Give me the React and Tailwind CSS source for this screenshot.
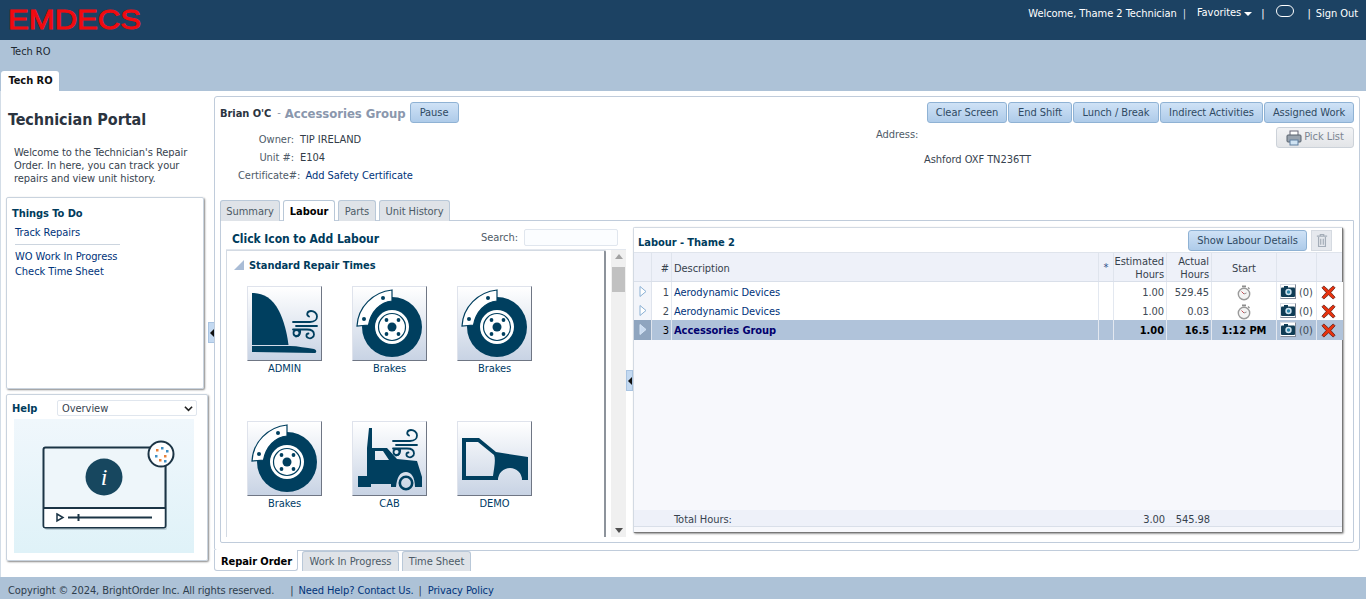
import React from "react";

const font = "font-['DejaVu_Sans_Condensed','DejaVu_Sans',sans-serif]";
const COLS = "grid grid-cols-[18px_20px_427px_15px_53px_45px_65px_40px_26px]";

function Btn({ children, className = "" }) {
  return (
    <button className={`h-[21px] rounded-[3px] border border-[#8fb2d4] bg-gradient-to-b from-[#cfe2f6] to-[#aecbe9] text-[#2f4a63] text-[11px] leading-none ${className}`}>
      {children}
    </button>
  );
}

function Tab({ children, active, className = "" }) {
  return (
    <div className={`h-[21px] flex items-center justify-center rounded-t-[3px] border border-b-0 border-[#b9c8d8] text-[11px] ${active ? "bg-white font-bold text-black" : "bg-[#dfe3e8] text-[#4c5a66]"} ${className}`}>
      {children}
    </div>
  );
}

function Wind({ x = 0, y = 0 }) {
  return (
    <g transform={`translate(${x} ${y})`} fill="none" stroke="#003f5f" strokeWidth="1.8" strokeLinecap="round">
      <path d="M0 11 H17 C22 11 24 8 24 5.5 C24 2 21 0 18 0 C14 0 13 4 16 5.5" />
      <path d="M3 15 H24" />
      <path d="M0 18.5 H14 C19 18.5 21 21 21 23.5 C21 26 18 28 15.5 27 C12.5 26 13 22.5 15.5 22.5" />
      <circle cx="3.5" cy="22" r="3" />
      <path d="M7 19 C8 22 6 25.5 3 25.5" />
    </g>
  );
}

function Brake() {
  return (
    <svg viewBox="0 0 73 73" className="w-full h-full">
      <circle cx="39" cy="40" r="30" fill="#003f5f" />
      <circle cx="39" cy="40" r="17" fill="#fff" />
      <circle cx="39" cy="40" r="13.5" fill="none" stroke="#003f5f" strokeWidth="1.2" />
      <circle cx="39" cy="40" r="4.5" fill="#003f5f" />
      <circle cx="33.5" cy="33" r="1.9" fill="#003f5f" />
      <circle cx="45.5" cy="33" r="1.9" fill="#003f5f" />
      <circle cx="33.5" cy="47" r="1.9" fill="#003f5f" />
      <circle cx="45.5" cy="47" r="1.9" fill="#003f5f" />
      <path d="M4 39 C5 20 20 5 39 3 L39 14 C27 15 18 25 15.5 38 Z" fill="#fff" stroke="#003f5f" strokeWidth="1.2" />
      <circle cx="11" cy="32" r="2" fill="#003f5f" />
      <circle cx="30" cy="11" r="2" fill="#003f5f" />
    </svg>
  );
}

function Admin() {
  return (
    <svg viewBox="0 0 73 73" className="w-full h-full">
      <path d="M4 6 C14 6 24 10 31 24 C36 34 39 46 40.5 58 H4 Z" fill="#003f5f" />
      <path d="M4 59 H42 C50 59 58 61 66 62 C69 63 69 66 66 66 L4 65 Z" fill="#003f5f" />
      <Wind x={45} y={24} />
    </svg>
  );
}

function Cab() {
  return (
    <svg viewBox="0 0 73 73" className="w-full h-full">
      <path fillRule="evenodd" d="M14 26 L16 6 H19 V26 H34 L44 37 L64 39 L69 55 V65 H62 C62 55 58 50 53 50 C47 50 44 55 43 65 H38 V62 H18 V65 H5 V54 H14 Z M22 29 V38 H36 L30 29 Z" fill="#003f5f" />
      <circle cx="53" cy="61" r="6.2" fill="none" stroke="#003f5f" strokeWidth="2.6" />
      <Wind x={40} y={8} />
    </svg>
  );
}

function Demo() {
  return (
    <svg viewBox="0 0 73 73" className="w-full h-full">
      <path fillRule="evenodd" d="M4 16 H21 L38 30 L70 35 V58 H64 A12 12 0 0 0 40 58 H4 Z M8 20 V54 H35 C36 46 38 38 36 33 L20 20 Z" fill="#003f5f" />
    </svg>
  );
}

function IconTile({ label, children }) {
  return (
    <div className="w-[105px] h-[135px]">
      <div className="w-[75px] h-[75px] border border-[#dfe3ec] border-r-[#6f7684] border-b-[#6f7684] bg-gradient-to-b from-white to-[#c8d3e4]">
        {children}
      </div>
      <div className="w-[75px] mt-[1px] text-center text-[11px] text-[#003b66] leading-[14px]">{label}</div>
    </div>
  );
}

function Camera() {
  return (
    <span className="w-[16px] h-[15px] border border-[#d8dde5] border-r-[#7e8796] border-b-[#7e8796] bg-white flex items-center justify-center">
      <svg viewBox="0 0 14 11" className="w-[14px] h-[11px]">
        <rect x="0" y="1.5" width="14" height="9.5" rx="1" fill="#0f3c55" />
        <rect x="3" y="0" width="4" height="2" fill="#0f3c55" />
        <circle cx="7.5" cy="6" r="3.2" fill="#cfe3ef" />
        <circle cx="7.5" cy="6" r="1.7" fill="#2d84a8" />
      </svg>
    </span>
  );
}

function RedX() {
  return (
    <svg viewBox="0 0 16 16" className="w-[15px] h-[15px] -ml-[3px]">
      <path d="M1 3 L3 1 L8 5.5 L13 1 L15 3 L10.5 8 L15 13 L13 15 L8 10.5 L3 15 L1 13 L5.5 8 Z" fill="#e8320e" stroke="#5a1a10" strokeWidth="0.8" />
    </svg>
  );
}

function Stopwatch() {
  return (
    <svg viewBox="0 0 14 16" className="w-[14px] h-[16px]">
      <rect x="5" y="0.5" width="4" height="1.8" fill="#8d8d8d" />
      <path d="M11 2.5 L12.5 4" stroke="#8d8d8d" strokeWidth="1.3" />
      <circle cx="7" cy="9" r="5.7" fill="#f4f4f4" stroke="#9a9a9a" strokeWidth="1.4" />
      <path d="M7 9 L4.5 6.5" stroke="#c5535a" strokeWidth="1" />
      <path d="M7 9 L9.5 8" stroke="#777" strokeWidth="0.8" />
    </svg>
  );
}

function Row({ n, hours, actual, selected, start }) {
  const c = selected ? "bg-[#b0c3da]" : "bg-white";
  const cell = `${c} flex items-center border-r border-[#e3e8f0] h-full`;
  const arrowFill = selected ? "#c9dbf0" : "#fff";
  return (
    <div className={`${COLS} h-[19px] border-b ${selected ? "border-[#b0c3da]" : "border-[#e6eaf1]"} text-[11px] ${selected ? "font-bold text-black" : "text-[#3e4a55]"}`}>
      <div className={`${selected ? "bg-[#8fa5bf]" : "bg-[#f3f5fa]"} flex items-center justify-center border-r border-[#dfe4ed] h-full`}>
        <svg viewBox="0 0 8 11" className="w-[8px] h-[11px]">
          <path d="M1 0.5 L7 5.5 L1 10.5 Z" fill={arrowFill} stroke={selected ? "#d7e5f5" : "#8ab0d4"} strokeWidth="1" />
        </svg>
      </div>
      <div className={`${cell} pt-[3px] justify-end pr-[2px] font-normal`}>{n}</div>
      <div className={`${cell} pt-[3px] pl-[2px] ${selected ? "text-[#00006e]" : "text-[#00337a]"}`}>
        {selected ? "Accessories Group" : "Aerodynamic Devices"}
      </div>
      <div className={cell}></div>
      <div className={`${cell} pt-[3px] justify-end pr-[2px]`}>{hours}</div>
      <div className={`${cell} pt-[3px] justify-end pr-[2px]`}>{actual}</div>
      <div className={`${cell} pt-[2px] justify-center`}>{start || <Stopwatch />}</div>
      <div className={`${cell} gap-[3px] pl-[3px] font-normal text-[#3e4a55]`}><Camera /><span className="pt-[3px]">(0)</span></div>
      <div className={`${c} pt-[1px] flex items-center justify-center h-full`}><RedX /></div>
    </div>
  );
}

export default function App() {
  return (
    <div className={`${font} w-[1366px] h-[599px] overflow-hidden flex flex-col bg-white text-[11px] tracking-[-0.05px] text-[#37434f]`}>
      {/* header */}
      <header className="h-[40px] bg-[#1c4263] flex items-start justify-between text-white shrink-0">
        <svg viewBox="0 0 142 40" className="w-[142px] h-[40px] ml-[7px]">
          <text x="1" y="29" textLength="133" lengthAdjust="spacingAndGlyphs" fill="#f10a0f" stroke="#f10a0f" strokeWidth="0.9" style={{ fontFamily: "'Liberation Sans', sans-serif", fontWeight: 400, fontSize: 28 }}>EMDECS</text>
        </svg>
        <div className="flex items-center h-[28px] pr-[8px] font-medium">
          <span>Welcome, Thame 2 Technician</span>
          <span className="ml-[6px] text-[#d8dfe8]">|</span>
          <span className="ml-[11px] -mt-[2px]">Favorites</span>
          <svg viewBox="0 0 8 4" className="w-[8px] h-[4px] ml-[3px]"><path d="M0 0 H8 L4 4 Z" fill="#fff" /></svg>
          <span className="ml-[9px]">|</span>
          <span className="ml-[12px] -mt-[6px] w-[18px] h-[12px] rounded-[6px] border border-white bg-[#1c4263]"></span>
          <span className="ml-[13px]">|</span>
          <span className="ml-[5px]">Sign Out</span>
        </div>
      </header>

      {/* sub navigation */}
      <div className="h-[51px] bg-[#adc2d7] shrink-0 flex flex-col justify-between">
        <div className="pl-[11px] pt-[4px] text-[#1e2a33] leading-[15px]">Tech RO</div>
        <div className="ml-[1px] w-[58px] h-[20px] pt-[1px] pl-[1px] bg-white rounded-t-[3px] flex items-center justify-center font-bold text-[#111]">Tech RO</div>
      </div>

      {/* main */}
      <main className="h-[486px] flex bg-white border-l border-[#d3dde7] shrink-0">
        <aside className="relative w-[213px] shrink-0 pl-[5px]">
          <h1 className="pt-[18px] pl-[2px] text-[16px] leading-[22px] font-bold text-[#2b3440]">Technician Portal</h1>
          <p className="mt-[15px] pl-[8px] leading-[13px] text-[#37434f]">
            Welcome to the Technician's Repair<br />Order. In here, you can track your<br />repairs and view unit history.
          </p>
          <section className="mt-[12px] w-[198px] h-[192px] border border-[#c9d3de] rounded-[2px] shadow-[1px_1px_2px_#888] pl-[5px] pt-[9px] text-[#00337a]">
            <div className="font-bold text-[#003b5c] leading-[14px]">Things To Do</div>
            <div className="mt-[5px] ml-[3px] leading-[14px]">Track Repairs</div>
            <div className="mt-[4px] ml-[3px] w-[105px] border-t border-[#ccd5df]"></div>
            <div className="mt-[4px] ml-[3px] leading-[15px]">WO Work In Progress</div>
            <div className="ml-[3px] leading-[15px]">Check Time Sheet</div>
          </section>
          <section className="mt-[5px] w-[202px] h-[167px] border border-[#c9d3de] rounded-[2px] shadow-[1px_1px_2px_#888] pt-[5px]">
            <div className="flex items-center h-[16px] pl-[5px]">
              <span className="font-bold text-[#003b5c] w-[45px] pt-[2px]">Help</span>
              <div className="w-[140px] h-[16px] border border-[#e0e6ee] rounded-[2px] flex items-center justify-between pl-[4px] pr-[3px] text-[#37434f]">
                <span className="pt-[2px]">Overview</span>
                <svg viewBox="0 0 10 7" className="w-[9px] h-[7px]"><path d="M1 1.5 L5 5.5 L9 1.5" fill="none" stroke="#222" strokeWidth="1.8" /></svg>
              </div>
            </div>
            <div className="mt-[3px] ml-[7px] w-[180px] h-[134px] bg-gradient-to-b from-[#f0f7fc] to-[#dff2f8]">
              <svg viewBox="0 0 180 134" className="w-full h-full">
                <rect x="31" y="31" width="122" height="80" rx="2" fill="#8fa3ad" opacity="0.45" />
                <rect x="29.5" y="28.5" width="122" height="80" rx="2" fill="#eef6fa" stroke="#1b3445" strokeWidth="2" />
                <rect x="30.5" y="90" width="120" height="18" fill="#fff" />
                <path d="M29.5 89 H151.5" stroke="#1b3445" strokeWidth="2" />
                <circle cx="90" cy="58" r="18.5" fill="#17475f" />
                <text x="90" y="66" textAnchor="middle" fill="#fff" style={{ fontFamily: "'Liberation Serif', serif", fontStyle: "italic", fontSize: 24 }}>i</text>
                <path d="M43 95 L49 98.5 L43 102 Z" fill="#fff" stroke="#1b3445" strokeWidth="1.5" />
                <path d="M54 98.5 H138" stroke="#1b3445" strokeWidth="1.8" />
                <path d="M64.5 95 V102" stroke="#1b3445" strokeWidth="2" />
                <circle cx="147" cy="35" r="12.5" fill="#fff" stroke="#1b3445" strokeWidth="2" />
                <g fill="#e9813a">
                  <rect x="142" y="30" width="2.5" height="2.5" /><rect x="150" y="36" width="2.5" height="2.5" /><rect x="145" y="40" width="2.5" height="2.5" />
                </g>
                <g fill="#3f8fc4">
                  <rect x="147" y="28" width="2.5" height="2.5" /><rect x="152" y="31" width="2.5" height="2.5" /><rect x="141" y="36" width="2.5" height="2.5" /><rect x="150" y="41" width="2.5" height="2.5" />
                </g>
              </svg>
            </div>
          </section>
          <div className="absolute left-[207px] top-[231px] w-[7px] h-[21px] bg-[#c3d9f1] border border-[#a9c4e2] flex items-center justify-center">
            <svg viewBox="0 0 4 8" className="w-[4px] h-[8px]"><path d="M4 0 V8 L0 4 Z" fill="#111" /></svg>
          </div>
        </aside>

        <div className="w-[1146px] shrink-0 pt-[5px]">
          <div className="relative h-[455px] border border-[#c0ccdb] rounded-[3px]">
            {/* order header */}
            <div className="h-[103px] flex pl-[5px] pr-[5px]">
              <div className="w-[655px] shrink-0">
                <div className="flex items-center h-[21px] mt-[5px]">
                  <span className="font-bold text-[#2b3440] pt-[4px]">Brian O'C</span>
                  <span className="ml-[6px] text-[#8a97ad] pt-[2px]">-</span>
                  <span className="ml-[4px] text-[13px] font-bold text-[#8a97ad] pt-[2px]">Accessories Group</span>
                  <Btn className="ml-[4px] w-[49px]">Pause</Btn>
                </div>
                <div className="mt-[8px] grid grid-cols-[70px_auto] gap-x-[6px] w-fit ml-[4px] leading-[18px]">
                  <div className="text-right text-[#4f5b68]">Owner:</div><div className="text-[#333d48]">TIP IRELAND</div>
                  <div className="text-right text-[#4f5b68]">Unit #:</div><div className="text-[#333d48]">E104</div>
                </div>
                <div className="flex ml-[18px] leading-[18px]">
                  <span className="text-[#4f5b68]">Certificate#:</span>
                  <span className="ml-[5px] text-[#00337a]">Add Safety Certificate</span>
                </div>
              </div>
              <div className="flex-1 relative pl-[1px]">
                <div className="pt-[31px] text-[#4f5b68] leading-[14px]">Address:</div>
                <div className="mt-[11px] ml-[48px] leading-[14px] text-[#37434f]">Ashford OXF TN236TT</div>
                <div className="absolute right-0 top-[5px] flex flex-col items-end gap-[4px]">
                  <div className="flex gap-[1px]">
                    <Btn className="w-[80px]">Clear Screen</Btn>
                    <Btn className="w-[64px]">End Shift</Btn>
                    <Btn className="w-[86px]">Lunch / Break</Btn>
                    <Btn className="w-[103px]">Indirect Activities</Btn>
                    <Btn className="w-[90px]">Assigned Work</Btn>
                  </div>
                  <button className="w-[78px] h-[21px] rounded-[3px] border border-[#ccd2d9] bg-gradient-to-b from-[#f2f3f5] to-[#e3e5e8] flex items-center justify-center gap-[2px] text-[#7b8591]">
                    <svg viewBox="0 0 16 16" className="w-[16px] h-[16px]">
                      <rect x="4" y="1" width="8" height="5" fill="#fff" stroke="#667" />
                      <rect x="1" y="5" width="14" height="7" rx="1" fill="#98a2ad" stroke="#59636e" />
                      <rect x="4" y="10" width="8" height="5" fill="#cfe3f3" stroke="#5f7fa0" />
                    </svg>
                    Pick List
                  </button>
                </div>
              </div>
            </div>

            {/* tabs */}
            <div className="flex gap-[3px] pl-[5px] h-[21px]">
              <Tab className="w-[60px] pt-[2px]">Summary</Tab>
              <Tab active className="w-[52px] pt-[2px]">Labour</Tab>
              <Tab className="w-[38px] pt-[2px]">Parts</Tab>
              <Tab className="w-[71px] pt-[2px]">Unit History</Tab>
            </div>

            {/* tab panel */}
            <div className="ml-[5px] -mt-[1px] w-[1134px] h-[323px] border border-[#c0ccdb] rounded-b-[2px] flex">
              <div className="w-[405px] shrink-0">
                <div className="h-[29px] flex items-center justify-between border-b border-[#e2e7ee] ml-[5px] pl-[6px] pr-[8px] pt-[7px]">
                  <span className="font-bold text-[12px] text-[#003b5c]">Click Icon to Add Labour</span>
                  <div className="flex items-center gap-[6px] -mt-[3px]">
                    <span className="text-[#4f5b68] pt-[2px]">Search:</span>
                    <span className="w-[94px] h-[17px] border border-[#e0e6ee] rounded-[2px] bg-[#fbfdff]"></span>
                  </div>
                </div>
                <div className="flex h-[287px] ml-[5px] gap-[5px]">
                  <div className="w-[380px] border-l border-t border-[#d3dae3] border-r-2 border-r-[#8d939b] overflow-hidden rounded-tr-[2px]">
                    <div className="h-[35px] flex items-start pt-[7px] pl-[7px] gap-[5px]">
                      <svg viewBox="0 0 10 10" className="w-[10px] h-[10px] mt-[2px]"><path d="M10 0 V10 H0 Z" fill="#a9bcd6" /></svg>
                      <span className="font-bold text-[#003b5c]">Standard Repair Times</span>
                    </div>
                    <div className="flex flex-wrap pl-[20px]">
                      <IconTile label="ADMIN"><Admin /></IconTile>
                      <IconTile label="Brakes"><Brake /></IconTile>
                      <IconTile label="Brakes"><Brake /></IconTile>
                      <IconTile label="Brakes"><Brake /></IconTile>
                      <IconTile label="CAB"><Cab /></IconTile>
                      <IconTile label="DEMO"><Demo /></IconTile>
                    </div>
                  </div>
                  <div className="w-[15px] bg-[#f0f0f0] flex flex-col items-center justify-between py-[4px] relative">
                    <svg viewBox="0 0 8 5" className="w-[8px] h-[5px]"><path d="M4 0 L8 5 H0 Z" fill="#a3a3a3" /></svg>
                    <span className="absolute top-[17px] left-[1px] w-[13px] h-[25px] bg-[#c1c1c1]"></span>
                    <svg viewBox="0 0 8 5" className="w-[8px] h-[5px]"><path d="M0 0 H8 L4 5 Z" fill="#505050" /></svg>
                  </div>
                </div>
              </div>

              <div className="w-[7px] shrink-0 flex items-start pt-[149px]">
                <div className="w-[7px] h-[21px] bg-[#c3d9f1] border border-[#a9c4e2] flex items-center justify-center">
                  <svg viewBox="0 0 4 8" className="w-[4px] h-[8px]"><path d="M4 0 V8 L0 4 Z" fill="#111" /></svg>
                </div>
              </div>

              {/* labour panel */}
              <div className="mt-[6px] w-[710px] h-[306px] border border-[#d3dae3] border-r-[#777] border-b-[#777] rounded-[2px] shadow-[1px_1px_2px_#999] flex flex-col bg-[#f7f8fc]">
                <div className="h-[25px] bg-white flex items-center justify-between pl-[4px] pr-[10px] border-b border-[#dfe4ec]">
                  <span className="font-bold text-[#003b5c] mt-[6px]">Labour - Thame 2</span>
                  <div className="flex items-center gap-[4px] mt-[1px]">
                    <Btn className="w-[119px]">Show Labour Details</Btn>
                    <span className="w-[21px] h-[21px] bg-[#e6e9ee] border border-[#d5dae1] flex items-center justify-center">
                      <svg viewBox="0 0 14 16" className="w-[12px] h-[15px]">
                        <path d="M1 3 H13 M5 3 V1 H9 V3 M3 4 V15 H11 V4 M5.5 6 V13 M8.5 6 V13" fill="none" stroke="#a4adb8" strokeWidth="1.4" />
                      </svg>
                    </span>
                  </div>
                </div>
                <div className={`${COLS} h-[29px] bg-[#eef1f9] border-b border-[#d9dfe9] text-[#36414d]`}>
                  <div className="border-r border-[#dfe4ed]"></div>
                  <div className="border-r border-[#dfe4ed] flex items-center justify-end pr-[2px] pt-[5px]">#</div>
                  <div className="border-r border-[#dfe4ed] flex items-center pl-[2px] pt-[5px]">Description</div>
                  <div className="border-r border-[#dfe4ed] flex items-center justify-center text-[#2d4f8a] pt-[3px]">*</div>
                  <div className="border-r border-[#dfe4ed] text-right pr-[2px] leading-[13px] pt-[2px]">Estimated<br />Hours</div>
                  <div className="border-r border-[#dfe4ed] text-right pr-[2px] leading-[13px] pt-[2px]">Actual<br />Hours</div>
                  <div className="border-r border-[#dfe4ed] flex items-center justify-center pt-[5px]">Start</div>
                  <div className="border-r border-[#dfe4ed]"></div>
                  <div></div>
                </div>
                <Row n="1" hours="1.00" actual="529.45" />
                <Row n="2" hours="1.00" actual="0.03" />
                <Row n="3" hours="1.00" actual="16.5" selected start="1:12 PM" />
                <div className="flex-1"></div>
                <div className={`${COLS} h-[17px] bg-[#eef1f9] border-b border-[#d9dfe9] items-center text-[#37434f] mb-[5px] [&>div]:pt-[2px]`}>
                  <div></div><div></div>
                  <div className="pl-[2px]">Total Hours:</div>
                  <div></div>
                  <div className="text-right pr-[2px]">3.00</div>
                  <div className="text-right pr-[2px]">545.98</div>
                  <div></div><div></div><div></div>
                </div>
              </div>
            </div>
          </div>

          {/* bottom tabs */}
          <div className="flex gap-[4px] h-[20px] -mt-[1px] relative">
            <div className="w-[84px] h-[21px] pt-[5px] pl-[1px] bg-white border border-t-0 border-[#c0ccdb] rounded-b-[3px] flex items-center justify-center font-bold text-black">Repair Order</div>
            <Tab className="w-[97px] !h-[20px] mt-[1px] pt-[1px]">Work In Progress</Tab>
            <Tab className="w-[69px] !h-[20px] mt-[1px] -ml-[1px] pt-[1px]">Time Sheet</Tab>
          </div>
        </div>
      </main>

      {/* footer */}
      <footer className="h-[22px] bg-[#adc2d7] flex items-center pl-[8px] pt-[6px] tracking-[-0.1px] text-[#2d3d4d] shrink-0">
        <span>Copyright © 2024, BrightOrder Inc. All rights reserved.</span>
        <span className="ml-[16px]">|</span>
        <span className="ml-[5px] text-[#00337a]">Need Help? Contact Us.</span>
        <span className="ml-[5px]">|</span>
        <span className="ml-[6px] text-[#00337a]">Privacy Policy</span>
      </footer>
    </div>
  );
}
